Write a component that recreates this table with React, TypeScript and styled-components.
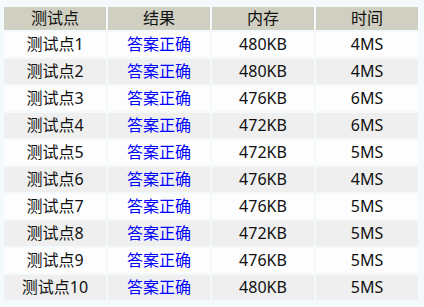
import {FC} from 'react';
import styled, {createGlobalStyle} from 'styled-components';

const GlobalStyle = createGlobalStyle`
    body {
        margin: 0;
        background: #f4f9fb;
        font-family: "Noto Sans", "Noto Sans CJK SC", sans-serif;
    }
`

interface Result {
    name: string;
    status: string;
    memory: string;
    time: string;
}

const results: Result[] = [
    {name: '测试点1', status: '答案正确', memory: '480KB', time: '4MS'},
    {name: '测试点2', status: '答案正确', memory: '480KB', time: '4MS'},
    {name: '测试点3', status: '答案正确', memory: '476KB', time: '6MS'},
    {name: '测试点4', status: '答案正确', memory: '472KB', time: '6MS'},
    {name: '测试点5', status: '答案正确', memory: '472KB', time: '5MS'},
    {name: '测试点6', status: '答案正确', memory: '476KB', time: '4MS'},
    {name: '测试点7', status: '答案正确', memory: '476KB', time: '5MS'},
    {name: '测试点8', status: '答案正确', memory: '472KB', time: '5MS'},
    {name: '测试点9', status: '答案正确', memory: '476KB', time: '5MS'},
    {name: '测试点10', status: '答案正确', memory: '480KB', time: '5MS'},
];

const Table = styled.table`
    margin: 5px 0 0 2px;
    border-collapse: separate;
    border-spacing: 2px;
    table-layout: fixed;
    font-size: 16px;
    color: #111;
`

const HeadCell = styled.th`
    width: 102px;
    height: 23px;
    padding: 0;
    background: #d0d0c2;
    font-weight: normal;
    text-align: center;
    line-height: 23px;
`

const Row = styled.tr<{ $striped: boolean }>`
    background: ${p => p.$striped ? '#efefef' : '#fdfdfd'};
`

const Cell = styled.td<{ $ok?: boolean }>`
    height: 25px;
    padding: 0;
    text-align: center;
    line-height: 25px;
    color: ${p => p.$ok ? '#0000ff' : '#111'};
`

const App: FC = () => {
    return (
        <>
            <GlobalStyle/>
            <Table>
                <thead>
                    <tr>
                        <HeadCell>测试点</HeadCell>
                        <HeadCell>结果</HeadCell>
                        <HeadCell>内存</HeadCell>
                        <HeadCell>时间</HeadCell>
                    </tr>
                </thead>
                <tbody>
                    {results.map((r, i) => (
                        <Row key={r.name} $striped={i % 2 === 1}>
                            <Cell>{r.name}</Cell>
                            <Cell $ok>{r.status}</Cell>
                            <Cell>{r.memory}</Cell>
                            <Cell>{r.time}</Cell>
                        </Row>
                    ))}
                </tbody>
            </Table>
        </>
    )
}

export default App;
